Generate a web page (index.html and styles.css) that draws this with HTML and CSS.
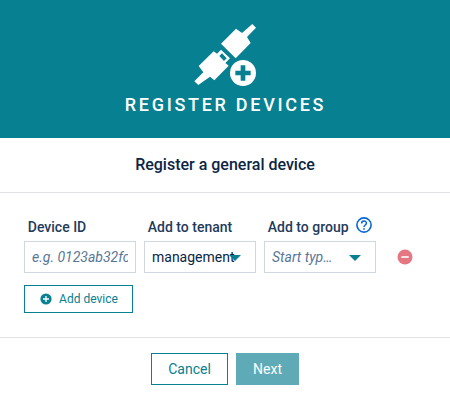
FILE: index.html
```html
<!DOCTYPE html>
<html lang="en">
<head>
<meta charset="utf-8">
<title>Register devices</title>
<link rel="stylesheet" href="styles.css">
</head>
<body>
<main class="dialog">
  <header class="banner">
    <svg class="banner-icon" viewBox="0 0 270 240" fill="#fff" aria-hidden="true">
      <path d="M217 27 228 38 201 66 212 84 167 130 123 86 168 41 186 54Z"/>
      <path fill-rule="evenodd" d="M123 104 150 130 136 144 146 152 103 196 90 185 55 210 43 199 70 172 56 153 101 109 111 116ZM126 115 118 123 132 138 140 130Z"/>
      <circle cx="189" cy="174" r="39"/>
      <path fill="#078091" d="M182 151H196V167H212V181H196V197H182V181H166V167H182Z"/>
    </svg>
    <h1 class="banner-title">REGISTER DEVICES</h1>
  </header>
  <h2 class="subtitle">Register a general device</h2>
  <section class="content">
    <div class="row">
      <div class="field">
        <span class="label">Device ID</span>
        <div class="control"><span class="value hint">e.g. 0123ab32fcd</span></div>
      </div>
      <div class="field">
        <span class="label">Add to tenant</span>
        <div class="control select"><span class="value overflow">management</span>
          <svg class="arrow" viewBox="0 0 12 6"><path d="M0 0H12L6 6Z"/></svg></div>
      </div>
      <div class="field">
        <span class="label">Add to group
          <svg class="help" viewBox="0 0 16 16" fill="none" stroke="#0668d4"><circle cx="8" cy="8" r="7.1" stroke-width="1.6"/><path d="M5.6 6.4C5.6 3.2 10.4 3.2 10.4 6.2C10.4 8 8 8 8 10" stroke-width="1.5"/><path d="M8 11.2V12.7" stroke-width="1.6"/></svg></span>
        <div class="control select"><span class="value hint">Start typ…</span>
          <svg class="arrow" viewBox="0 0 12 6"><path d="M0 0H12L6 6Z"/></svg></div>
      </div>
      <svg class="remove" viewBox="0 0 16 16"><circle cx="8" cy="8" r="7.5" fill="#e57782"/><path d="M4.3 8H11.7" stroke="#fff" stroke-width="1.6"/></svg>
    </div>
    <button class="button add"><svg class="plus" viewBox="0 0 12 12"><circle cx="6" cy="6" r="5.6" fill="#078091"/><path d="M3 6H9M6 3V9" stroke="#fff" stroke-width="1.3"/></svg>Add device</button>
  </section>
  <footer class="footer">
    <button class="button cancel">Cancel</button>
    <button class="button next" disabled>Next</button>
  </footer>
</main>
</body>
</html>
```
FILE: styles.css
```css
* { box-sizing: border-box; }
body {
  margin: 0;
  background: #fff;
  color: #0b2545;
  font-family: Roboto, "Liberation Sans", sans-serif;
  font-size: 14px;
}
.dialog { height: 400px; overflow: hidden; }
.banner {
  display: flex;
  flex-direction: column;
  align-items: center;
  height: 138px;
  padding-top: 15px;
  background: #078091;
  color: #fff;
}
.banner-icon { width: 90px; height: 80px; flex: none; }
.banner-title {
  margin: 0 0 0 1px;
  font-size: 18px;
  line-height: 20px;
  font-weight: 500;
  letter-spacing: 2.7px;
}
.subtitle {
  margin: 0;
  height: 55px;
  border-bottom: 1px solid #dfe1e5;
  text-align: center;
  font-size: 16px;
  font-weight: 500;
  line-height: 53px;
}
.content {
  height: 145px;
  padding: 24px 24px 0;
  border-bottom: 1px solid #dfe1e5;
}
.row { display: flex; align-items: flex-end; gap: 8px; }
.field { width: 112px; }
.label {
  display: flex;
  align-items: center;
  height: 24px;
  padding: 0 0 4px 3.8px;
  color: #1f3b5c;
  font-weight: 500;
  line-height: 20px;
  white-space: nowrap;
}
.help { width: 16px; height: 16px; margin: -4px 0 0 7.5px; flex: none; }
.control {
  display: flex;
  align-items: center;
  height: 32px;
  padding: 0 7px;
  border: 1px solid #d0d7e0;
}
.value {
  flex: 1;
  min-width: 0;
  overflow: hidden;
  white-space: nowrap;
}
.overflow { overflow: visible; }
.hint { color: #587797; font-style: italic; }
.arrow {
  width: 12px;
  height: 6px;
  margin: 2px 7px 0 0;
  flex: none;
  fill: #078091;
}
.remove { width: 16px; height: 16px; margin: 0 0 8px 13px; }
.button {
  display: inline-flex;
  align-items: center;
  justify-content: center;
  height: 32px;
  padding: 0;
  border: 1px solid #078091;
  background: #fff;
  color: #078091;
  font-family: inherit;
  font-size: 14px;
}
.add { width: 109px; height: 28px; margin-top: 12px; font-size: 12px; }
.plus { width: 12px; height: 12px; margin: 0 7px 0 1px; }
.footer { display: flex; justify-content: center; gap: 8px; padding-top: 15px; }
.cancel { width: 77px; }
.next { width: 63px; border-color: #5eabb7; background: #5eabb7; color: #fff; }
```
